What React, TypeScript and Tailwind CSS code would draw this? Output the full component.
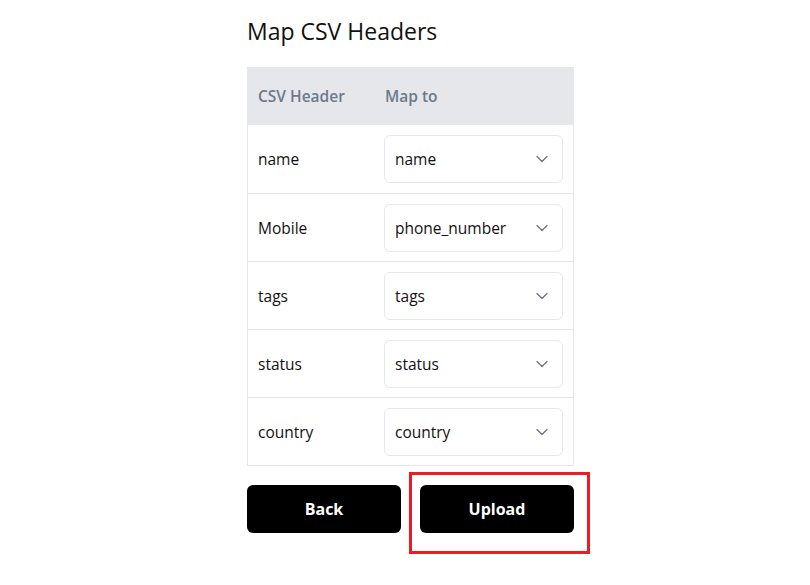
import React from "react";

const rows: [string, string][] = [
  ["name", "name"],
  ["Mobile", "phone_number"],
  ["tags", "tags"],
  ["status", "status"],
  ["country", "country"],
];

function Chevron() {
  return (
    <svg width="12" height="8" viewBox="0 0 12 8" fill="none" className="shrink-0">
      <path d="M1 1.5 L6 6.5 L11 1.5" stroke="#6b7280" strokeWidth="1.3" strokeLinecap="round" strokeLinejoin="round" />
    </svg>
  );
}

export default function App() {
  return (
    <div
      className="w-[810px] h-[585px] bg-white text-[#111] pl-[247px] pt-[15px]"
      style={{ fontFamily: '"Open Sans", "Noto Sans", sans-serif' }}
    >
      <div className="w-[327px]">
        <h1 className="text-[23px] leading-[32px] text-[#111] mb-[20px]">Map CSV Headers</h1>
        <div className="border border-[#e5e7eb]">
          <div className="flex h-[57px] items-center bg-[#e5e7eb] text-[15.5px] font-semibold text-[#6b7a8c]">
            <div className="w-[125px] pl-[10px]">CSV Header</div>
            <div className="pl-[12px]">Map to</div>
          </div>
          {rows.map(([a, b], i) => (
            <div
              key={a}
              className={`flex h-[68px] items-center text-[15.5px] ${i > 0 ? "border-t border-[#e5e7eb]" : ""}`}
            >
              <div className="w-[125px] pl-[10px] pt-[2px]">{a}</div>
              <div className="pl-[11px]">
                <div className="flex h-[48px] w-[179px] items-center justify-between rounded-[6px] border border-[#e5e7eb] pl-[10px] pr-[14px]">
                  <span className="pt-[2px]">{b}</span>
                  <Chevron />
                </div>
              </div>
            </div>
          ))}
        </div>
        <div className="mt-[19px] flex gap-[19px]">
          <button className="h-[48px] w-[154px] rounded-[6px] bg-black text-[16px] font-bold text-white">Back</button>
          <div className="relative">
            <button className="h-[48px] w-[154px] rounded-[6px] bg-black text-[16px] font-bold text-white">Upload</button>
            <div className="pointer-events-none absolute left-[-11px] top-[-13px] h-[82px] w-[181px] border-[3px] border-[#ed1c24]" />
          </div>
        </div>
      </div>
    </div>
  );
}
